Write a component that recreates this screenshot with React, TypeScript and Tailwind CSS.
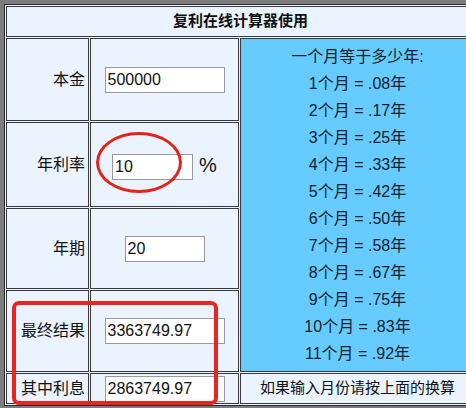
import React from 'react';

const font = { fontFamily: '"Liberation Sans", "Noto Sans CJK SC", sans-serif' };

const months = ['.08', '.17', '.25', '.33', '.42', '.50', '.58', '.67', '.75', '.83', '.92'];

const cell = 'border border-[#3a3a3a] bg-[#eaf3fe]';
const labelCell = `${cell} flex items-center justify-end pr-[3px] text-[16px] text-[#111]`;
const inputCell = `${cell} flex items-center justify-center`;
const inputCls =
  'h-[26px] border border-[#9a9a9a] bg-white px-[2px] text-[16px] text-[#111] outline-none';

const App: React.FC = () => {
  return (
    <div className="relative h-[408px] w-[466px] overflow-hidden bg-[#7d7d7d] pl-[4px] pt-[4px]" style={font}>
      <div className="w-max border border-[#2a2a2a] bg-[#eaf3fe] p-[1px]">
        <div className="grid grid-cols-[83px_149px_235px] grid-rows-[31px_83px_85px_81px_82px_31px] gap-[1px]">
          <div className={`${cell} col-span-3 flex items-center justify-center text-[15px] font-bold text-[#111]`}>
            复利在线计算器使用
          </div>

          <div className={labelCell}>本金</div>
          <div className={inputCell}>
            <input className={`${inputCls} w-[120px]`} defaultValue="500000" />
          </div>
          <div className="row-span-4 flex flex-col items-center justify-center border border-[#3a3a3a] bg-[#66ccff] text-[16px] leading-[27px] text-[#15202b]">
            <div>一个月等于多少年:</div>
            {months.map((m, i) => (
              <div key={m}>
                {i + 1}个月 = {m}年
              </div>
            ))}
          </div>

          <div className={labelCell}>年利率</div>
          <div className={`${cell} flex items-center justify-center`}>
            <div className="flex items-baseline">
              <input className={`${inputCls} w-[81px]`} defaultValue="10" />
              <span className="ml-[6px] text-[20px] text-[#111]">%</span>
            </div>
          </div>

          <div className={labelCell}>年期</div>
          <div className={inputCell}>
            <input className={`${inputCls} w-[80px]`} defaultValue="20" />
          </div>

          <div className={labelCell}>最终结果</div>
          <div className={inputCell}>
            <input className={`${inputCls} w-[120px]`} defaultValue="3363749.97" />
          </div>

          <div className={labelCell}>其中利息</div>
          <div className={inputCell}>
            <input className={`${inputCls} h-[25px] w-[120px]`} defaultValue="2863749.97" />
          </div>
          <div className={`${cell} flex items-center justify-center text-[15px] text-[#111]`}>
            如果输入月份请按上面的换算
          </div>
        </div>
      </div>

      {/* red annotations */}
      <div className="absolute left-[96px] top-[132px] h-[61px] w-[86px] rounded-[50%] border-[3px] border-[#e3221c]" />
      <div className="absolute left-[12px] top-[301px] h-[104px] w-[206px] rounded-[7px] border-[4px] border-[#e8261f]" />
    </div>
  );
};

export default App;
